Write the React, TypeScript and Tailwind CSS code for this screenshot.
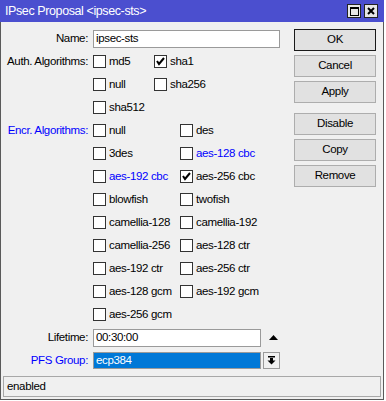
import type { ReactNode } from "react"

const FONT = { fontFamily: '"Liberation Sans", Arial, sans-serif' }

function Box({ checked }: { checked?: boolean }) {
  return (
    <span className="w-[13px] h-[13px] border border-[#333] bg-white flex items-center justify-center shrink-0">
      {checked && (
        <svg width="11" height="11" viewBox="0 0 11 11">
          <polyline points="2,5 4,8 9,2" fill="none" stroke="#000" strokeWidth="2" />
        </svg>
      )}
    </span>
  )
}

function Check({ label, checked, blue, w }: { label: string; checked?: boolean; blue?: boolean; w?: string }) {
  return (
    <div className={`flex items-center whitespace-nowrap ${w ?? ""}`}>
      <Box checked={checked} />
      <span className={`ml-[3px] ${blue ? "text-[#0000ff]" : "text-black"}`}>{label}</span>
    </div>
  )
}

function Row({ label, blue, children }: { label?: string; blue?: boolean; children: ReactNode }) {
  return (
    <div className="h-[23px] flex items-center">
      <div className={`w-[92px] shrink-0 text-right pr-[5px] whitespace-nowrap ${blue ? "text-[#0000ff]" : "text-black"}`}>{label}</div>
      {children}
    </div>
  )
}

const ENCR: [string, boolean, boolean, string?, boolean?, boolean?][] = [
  ["3des", false, false, "aes-128 cbc", false, true],
  ["aes-192 cbc", false, true, "aes-256 cbc", true, false],
  ["blowfish", false, false, "twofish", false, false],
  ["camellia-128", false, false, "camellia-192", false, false],
  ["camellia-256", false, false, "aes-128 ctr", false, false],
  ["aes-192 ctr", false, false, "aes-256 ctr", false, false],
  ["aes-128 gcm", false, false, "aes-192 gcm", false, false],
  ["aes-256 gcm", false, false],
]

function Btn({ children, primary, className }: { children: ReactNode; primary?: boolean; className?: string }) {
  return (
    <button
      className={`w-[82px] h-[22px] flex items-center justify-center bg-[#e1e1e1] border ${primary ? "border-[#1a1a1a]" : "border-[#adadad]"} text-black ${className ?? ""}`}
    >
      {children}
    </button>
  )
}

export default function App() {
  return (
    <div className="w-[386px] h-[401px] bg-white text-[11.5px] leading-none tracking-[-0.35px]" style={FONT}>
      <div className="w-[384px] h-[400px] flex flex-col bg-[#f0f0f0] border-l border-r border-b border-[#5a5a5a]">
        {/* title bar */}
        <div className="h-[22px] bg-[#4b4fcf] flex items-center pl-[5px] pr-[3px] -mx-px">
          <span className="text-white text-[12.5px] tracking-[-0.4px]">IPsec Proposal &lt;ipsec-sts&gt;</span>
          <div className="ml-auto flex gap-[3px] mr-[3px]">
            <span className="w-[14px] h-[14px] bg-[#e6e6e6] border border-[#222] flex items-center justify-center">
              <span className="w-[9px] h-[9px] border border-black border-t-2" />
            </span>
            <span className="w-[14px] h-[14px] bg-[#e6e6e6] border border-[#222] flex items-center justify-center">
              <svg width="10" height="10" viewBox="0 0 10 10">
                <path d="M2 2 L8 8 M8 2 L2 8" stroke="#000" strokeWidth="2" />
              </svg>
            </span>
          </div>
        </div>

        <div className="flex flex-1">
          {/* form */}
          <div className="flex flex-col pt-[5px] w-[290px]">
            <Row label="Name:">
              <div className="w-[187px] h-[18px] bg-white border border-[#9a9a9a] flex items-center pl-[2px]">ipsec-sts</div>
            </Row>
            <Row label="Auth. Algorithms:">
              <Check label="md5" w="w-[61px]" />
              <Check label="sha1" checked />
            </Row>
            <Row>
              <Check label="null" w="w-[61px]" />
              <Check label="sha256" />
            </Row>
            <Row>
              <Check label="sha512" />
            </Row>
            <Row label="Encr. Algorithms:" blue>
              <Check label="null" w="w-[87px]" />
              <Check label="des" />
            </Row>
            {ENCR.map(([a, ac, ab, b, bc, bb]) => (
              <Row key={a}>
                <Check label={a} checked={ac} blue={ab} w="w-[87px]" />
                {b && <Check label={b} checked={bc} blue={bb} />}
              </Row>
            ))}
            <Row label="Lifetime:">
              <div className="w-[168px] h-[18px] bg-white border border-[#9a9a9a] flex items-center pl-[2px]">00:30:00</div>
              <svg width="9" height="5" viewBox="0 0 9 5" className="ml-[8px]">
                <polygon points="4.5,0 9,5 0,5" fill="#000" />
              </svg>
            </Row>
            <Row label="PFS Group:" blue>
              <div className="w-[168px] h-[17px] bg-[#0078d7] border border-[#9a9a9a] flex items-center pl-[2px] text-white">ecp384</div>
              <div className="ml-[2px] w-[17px] h-[17px] border border-[#9a9a9a] bg-[#f0f0f0] flex items-center justify-center">
                <svg width="9" height="9" viewBox="0 0 9 9">
                  <rect x="1" y="0" width="7" height="1.5" fill="#000" />
                  <rect x="3" y="2" width="3" height="3" fill="#000" />
                  <polygon points="0.5,4.5 8.5,4.5 4.5,8.5" fill="#000" />
                </svg>
              </div>
            </Row>
          </div>

          {/* buttons */}
          <div className="flex flex-col pt-[7px] ml-[3px] gap-[4px]">
            <Btn primary>OK</Btn>
            <Btn>Cancel</Btn>
            <Btn>Apply</Btn>
            <Btn className="mt-[6px]">Disable</Btn>
            <Btn>Copy</Btn>
            <Btn>Remove</Btn>
          </div>
        </div>

        {/* status bar */}
        <div className="h-[21px] mx-[2px] mb-[2px] border border-[#a8a8a8] flex items-center pl-[3px]">enabled</div>
      </div>
    </div>
  )
}
